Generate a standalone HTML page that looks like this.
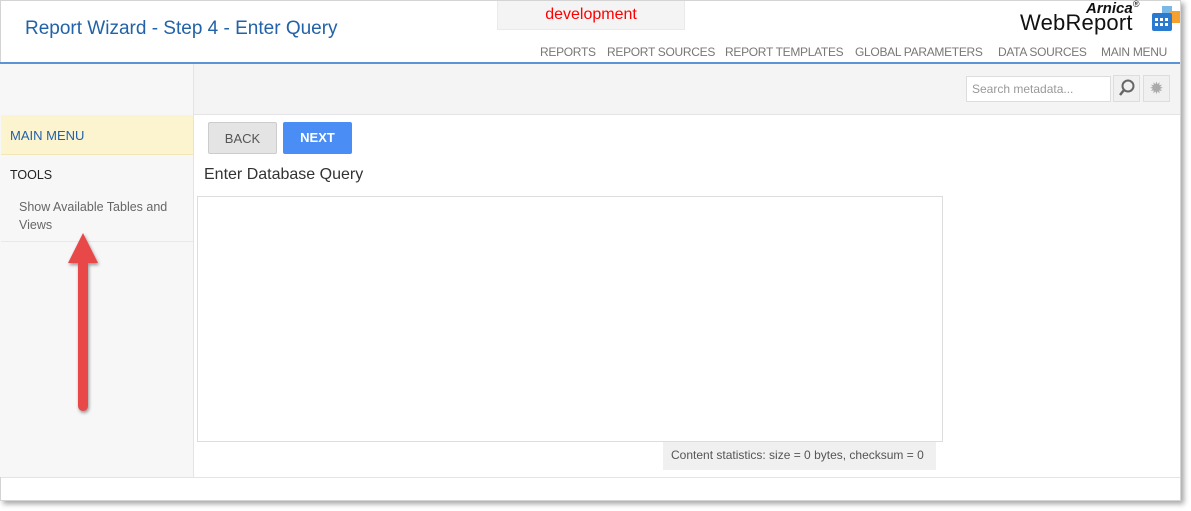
<!DOCTYPE html>
<html><head><meta charset="utf-8"><style>
*{box-sizing:border-box;margin:0;padding:0}
body{width:1191px;height:511px;background:#fff;font-family:"Liberation Sans",sans-serif;position:relative;overflow:hidden}
.frame{position:absolute;left:0;top:0;width:1181px;height:501px;border:1px solid #d4d4d4;background:#fff;box-shadow:3px 3px 5px rgba(0,0,0,.35)}
.abs{position:absolute}
.title{left:25px;top:18px;font-size:19px;color:#2162a8}
.dev{left:497px;top:1px;width:188px;height:29px;background:#f4f4f4;border:1px solid #eaeaea;border-top:none;color:#f00;font-size:16px;text-align:center;line-height:28px}
.nav{top:45px;font-size:12px;color:#777;white-space:nowrap;letter-spacing:-0.3px}
.hline{left:0;top:62px;width:1180px;height:2px;background:#5a93d6}
.tool{left:0;top:64px;width:1180px;height:51px;background:#f4f4f4;border-bottom:1px solid #e4e4e4}
.side{left:0;top:64px;width:194px;height:413px;background:#f7f7f7;border-right:1px solid #e4e4e4}
.mm{left:1px;top:115px;width:192px;height:40px;background:#fcf3cf;border-bottom:1px solid #f2e6b5;color:#2162a8;font-size:13px;padding:13px 9px}
.btn{height:32px;top:122px;border-radius:2px;font-size:13px;text-align:center;line-height:32px}
</style></head><body>
<div class="frame"></div>
<div class="abs title">Report Wizard - Step 4 - Enter Query</div>
<div class="abs dev">development</div>
<div class="abs" style="left:1086px;top:-1px;font-size:15px;font-weight:bold;font-style:italic;color:#111">Arnica<sup style="font-size:9px;font-weight:normal">®</sup></div>
<div class="abs" style="left:1020px;top:10px;font-size:22px;color:#111;letter-spacing:0.2px">WebReport</div>
<svg class="abs" style="left:1150px;top:4px" width="32" height="28"><rect x="12" y="2" width="10" height="10" fill="#7ab8e8"/><rect x="19" y="7" width="11" height="12" fill="#f6a030"/><rect x="2" y="9" width="20" height="18" rx="2" fill="#2a7bd0"/><g fill="#fff"><rect x="5" y="14" width="3" height="3"/><rect x="10" y="14" width="3" height="3"/><rect x="15" y="14" width="3" height="3"/><rect x="5" y="19" width="3" height="3"/><rect x="10" y="19" width="3" height="3"/><rect x="15" y="19" width="3" height="3"/></g></svg>
<div class="abs nav" style="left:540px">REPORTS</div>
<div class="abs nav" style="left:607px">REPORT SOURCES</div>
<div class="abs nav" style="left:725px">REPORT TEMPLATES</div>
<div class="abs nav" style="left:855px">GLOBAL PARAMETERS</div>
<div class="abs nav" style="left:998px">DATA SOURCES</div>
<div class="abs nav" style="left:1101px">MAIN MENU</div>
<div class="abs hline"></div>
<div class="abs tool"></div>
<div class="abs" style="left:966px;top:76px;width:145px;height:26px;background:#fff;border:1px solid #ddd;font-size:12px;color:#999;padding:5px 5px">Search metadata...</div>
<div class="abs" style="left:1113px;top:75px;width:27px;height:27px;border:1px solid #ddd;background:#f0f0f0"><svg width="25" height="25"><circle cx="14" cy="10" r="5.5" fill="none" stroke="#666" stroke-width="2"/><line x1="10" y1="14" x2="6" y2="19" stroke="#666" stroke-width="2.5"/></svg></div>
<div class="abs" style="left:1143px;top:75px;width:27px;height:27px;border:1px solid #ddd;background:#f0f0f0;color:#aaa;font-size:17px;text-align:center;line-height:25px">✹</div>
<div class="abs side"></div>
<div class="abs mm">MAIN MENU</div>
<div class="abs" style="left:10px;top:168px;font-size:12.5px;color:#222">TOOLS</div>
<div class="abs" style="left:19px;top:198px;font-size:12.5px;color:#666;line-height:18px;width:165px">Show Available Tables and Views</div>
<div class="abs" style="left:1px;top:241px;width:192px;height:1px;background:#e8e8e8"></div>
<svg class="abs" style="left:60px;top:228px" width="50" height="190"><g filter="drop-shadow(1px 2px 1.5px rgba(0,0,0,.4))"><polygon points="23,5 38,35 8,35" fill="#e84848"/><line x1="23" y1="30" x2="23" y2="178" stroke="#e84848" stroke-width="10" stroke-linecap="round"/></g></svg>
<div class="abs btn" style="left:208px;width:69px;background:#e4e4e4;border:1px solid #ccc;color:#555">BACK</div>
<div class="abs btn" style="left:283px;width:69px;background:#4a8ef5;color:#fff;font-weight:bold">NEXT</div>
<div class="abs" style="left:204px;top:166px;font-size:16px;color:#333">Enter Database Query</div>
<div class="abs" style="left:197px;top:196px;width:746px;height:246px;border:1px solid #ddd;background:#fff"></div>
<div class="abs" style="left:663px;top:442px;width:273px;height:28px;background:#f0f0f0;font-size:12px;color:#555;padding:6px 8px;white-space:nowrap">Content statistics: size = 0 bytes, checksum = 0</div>
<div class="abs" style="left:1px;top:477px;width:1179px;height:1px;background:#e4e4e4"></div>
</body></html>
